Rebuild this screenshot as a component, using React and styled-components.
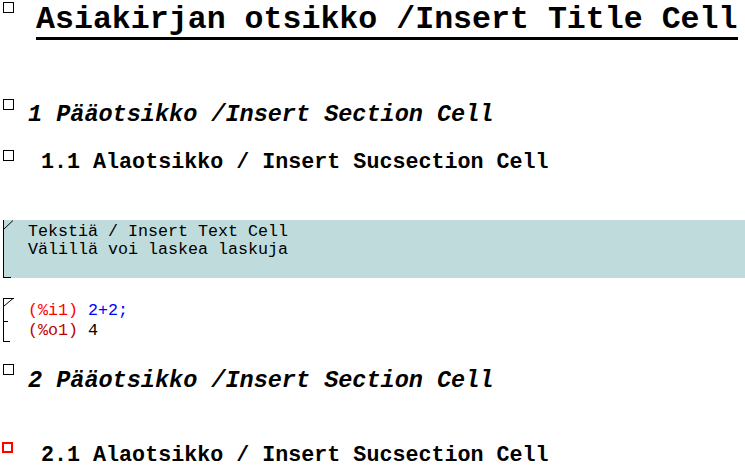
import React from "react";
import styled, { createGlobalStyle } from "styled-components";

const GlobalStyle = createGlobalStyle`
  html, body {
    margin: 0;
    background: #ffffff;
  }
  body {
    font-family: "Liberation Mono", "Courier New", monospace;
    color: #000000;
  }
`;

const Page = styled.div`
  width: 745px;
  height: 468px;
  box-sizing: border-box;
  padding-left: 3px;
  display: flex;
  flex-direction: column;
  overflow: hidden;
`;

const Cell = styled.div`
  display: flex;
  align-items: flex-start;
  margin-top: ${(p) => p.$gap || 0}px;
  background: ${(p) => p.$bg || "transparent"};
`;

const Gutter = styled.div`
  width: 25px;
  flex: none;
  display: flex;
`;

const Marker = styled.span`
  box-sizing: border-box;
  width: 11px;
  height: 11px;
  margin-top: ${(p) => p.$top || 0}px;
  margin-left: ${(p) => (p.$active ? -1 : 0)}px;
  border: ${(p) => (p.$active ? "2px solid #ff0000" : "1px solid #000000")};
`;

const Title = styled.div`
  margin-top: 3px;
  margin-left: 8px;
  font-size: 31.6px;
  line-height: 34px;
  font-weight: bold;
  white-space: pre;
  border-bottom: 3px solid #000000;
`;

const Section = styled.div`
  padding-top: ${(p) => p.$top || 0}px;
  font-size: 23.5px;
  line-height: 28px;
  font-weight: bold;
  font-style: italic;
  white-space: pre;
`;

const Subsection = styled.div`
  padding-top: ${(p) => p.$top || 0}px;
  font-size: 21.7px;
  line-height: 26px;
  font-weight: bold;
  white-space: pre;
`;

const TextBody = styled.div`
  padding: 3px 0 19px;
  font-size: 16.67px;
  line-height: 18px;
  white-space: pre;
`;

const CodeBody = styled.div`
  padding-top: 3px;
  font-size: 16.67px;
  line-height: 20px;
  white-space: pre;
`;

const Label = styled.span`
  color: ${(p) => (p.$out ? "#c00000" : "#ff0000")};
`;

const Input = styled.span`
  color: #0000ff;
`;

const TextBracket = () => (
  <svg width="12" height="58" style={{ display: "block" }}>
    <g stroke="#000" strokeWidth="1" fill="none">
      <line x1="0.5" y1="0" x2="0.5" y2="58" shapeRendering="crispEdges" />
      <line x1="1" y1="9" x2="10" y2="0.5" />
      <line x1="0" y1="57.5" x2="8" y2="57.5" shapeRendering="crispEdges" />
    </g>
  </svg>
);

const CodeBracket = () => (
  <svg width="12" height="44" style={{ display: "block" }}>
    <g stroke="#000" strokeWidth="1" fill="none">
      <line x1="0.5" y1="0" x2="0.5" y2="44" shapeRendering="crispEdges" />
      <line x1="0" y1="0.5" x2="11" y2="0.5" shapeRendering="crispEdges" />
      <line x1="1" y1="8" x2="10" y2="0.5" />
      <line x1="0" y1="23.5" x2="5" y2="23.5" shapeRendering="crispEdges" />
      <line x1="0" y1="43.5" x2="7" y2="43.5" shapeRendering="crispEdges" />
    </g>
  </svg>
);

export default function App() {
  return (
    <>
      <GlobalStyle />
      <Page>
        <Cell>
          <Gutter>
            <Marker $top={2} />
          </Gutter>
          <Title>Asiakirjan otsikko /Insert Title Cell</Title>
        </Cell>

        <Cell $gap={58}>
          <Gutter>
            <Marker $top={1} />
          </Gutter>
          <Section $top={3}>1 Pääotsikko /Insert Section Cell</Section>
        </Cell>

        <Cell $gap={21}>
          <Gutter>
            <Marker />
          </Gutter>
          <Subsection> 1.1 Alaotsikko / Insert Sucsection Cell</Subsection>
        </Cell>

        <Cell $gap={44} $bg="#bfdbdb">
          <Gutter>
            <TextBracket />
          </Gutter>
          <TextBody>
            {"Tekstiä / Insert Text Cell\nVälillä voi laskea laskuja"}
          </TextBody>
        </Cell>

        <Cell $gap={20}>
          <Gutter>
            <CodeBracket />
          </Gutter>
          <CodeBody>
            <div>
              <Label>(%i1)</Label> <Input>2+2;</Input>
            </div>
            <div>
              <Label $out>(%o1)</Label> 4
            </div>
          </CodeBody>
        </Cell>

        <Cell $gap={22}>
          <Gutter>
            <Marker />
          </Gutter>
          <Section $top={3}>2 Pääotsikko /Insert Section Cell</Section>
        </Cell>

        <Cell $gap={47}>
          <Gutter>
            <Marker $active />
          </Gutter>
          <Subsection $top={1}> 2.1 Alaotsikko / Insert Sucsection Cell</Subsection>
        </Cell>
      </Page>
    </>
  );
}
